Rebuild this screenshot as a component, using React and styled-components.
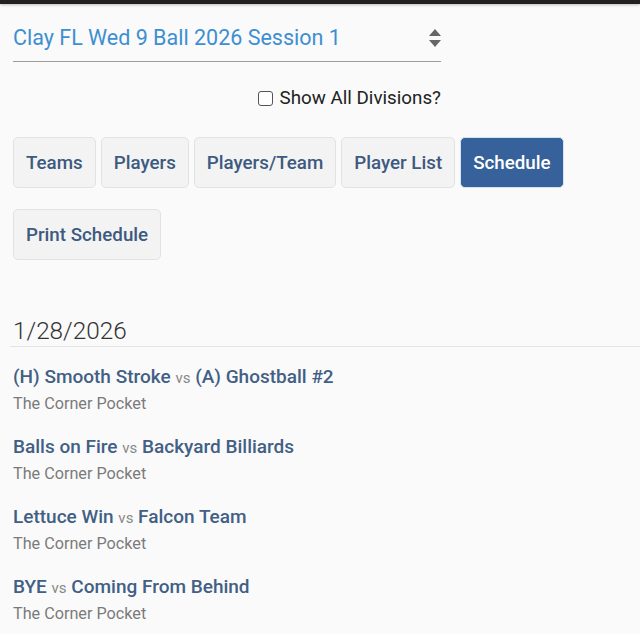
import React from 'react';
import styled, { createGlobalStyle } from 'styled-components';

const Global = createGlobalStyle`
  body {
    margin: 0;
    background: #fafafa;
    font-family: Roboto, "Liberation Sans", sans-serif;
  }
`;

const TopBar = styled.div`
  height: 4px;
  background: #231f20;
  box-shadow: 0 1px 3px rgba(0, 0, 0, 0.25);
`;

const Page = styled.div`
  padding: 0 0 0 13px;
`;

const Header = styled.div`
  width: 428px;
`;

const SelectBox = styled.div`
  margin-top: 18px;
  height: 40px;
  padding-bottom: 8px;
  box-sizing: border-box;
  display: flex;
  align-items: center;
  justify-content: space-between;
  border-bottom: 1px solid #9e9e9e;
  color: #3d8fd1;
  font-size: 21.5px;
`;

const Arrows = styled.svg`
  width: 12px;
  height: 18px;
`;

const CheckRow = styled.label`
  display: flex;
  justify-content: flex-end;
  align-items: center;
  gap: 7px;
  margin-top: 25px;
  font-size: 18.8px;
  color: #222;
`;

const Box = styled.span`
  width: 13px;
  height: 13px;
  border: 1px solid #555;
  border-radius: 3px;
  background: #fff;
`;

const Buttons = styled.div`
  display: flex;
  flex-wrap: wrap;
  gap: 21px 5px;
  margin-top: 28px;
`;

const Btn = styled.div`
  height: 49px;
  padding: 0 12px;
  display: flex;
  align-items: center;
  border-radius: 5px;
  font-size: 18.75px;
  font-weight: 500;
  border: 1px solid ${p => (p.active ? '#d6e2f0' : '#e2e2e2')};
  background: ${p => (p.active ? '#36619a' : '#f3f3f3')};
  color: ${p => (p.active ? '#fff' : '#3d5a80')};
`;

const DateHead = styled.div`
  margin: 56px 0 0 -3px;
  padding: 0 0 1px 3px;
  border-bottom: 1px solid #e4e4e4;
  font-size: 24.3px;
  font-weight: 300;
  color: #333;
`;

const Match = styled.div`
  margin-top: 18px;
  & + & {
    margin-top: 22px;
  }
`;

const Title = styled.div`
  font-size: 19px;
  font-weight: 500;
  color: #425f85;
`;

const Vs = styled.span`
  font-size: 15px;
  font-weight: 400;
  color: #888;
`;

const Venue = styled.div`
  margin-top: 6px;
  font-size: 16.2px;
  color: #7a7a7a;
`;

const matches = [
  ['(H) Smooth Stroke', '(A) Ghostball #2'],
  ['Balls on Fire', 'Backyard Billiards'],
  ['Lettuce Win', 'Falcon Team'],
  ['BYE', 'Coming From Behind'],
];

const tabs = ['Teams', 'Players', 'Players/Team', 'Player List', 'Schedule', 'Print Schedule'];

export default function App() {
  return (
    <>
      <Global />
      <TopBar />
      <Page>
        <Header>
          <SelectBox>
            <span>Clay FL Wed 9 Ball 2026 Session 1</span>
            <Arrows viewBox="0 0 12 18">
              <path d="M6 0 L12 7 H0 Z" fill="#666" />
              <path d="M0 11 H12 L6 18 Z" fill="#666" />
            </Arrows>
          </SelectBox>
          <CheckRow>
            <Box />
            <span>Show All Divisions?</span>
          </CheckRow>
        </Header>
        <Buttons>
          {tabs.map(t => (
            <Btn key={t} active={t === 'Schedule'}>{t}</Btn>
          ))}
        </Buttons>
        <DateHead>1/28/2026</DateHead>
        {matches.map(([h, a]) => (
          <Match key={h}>
            <Title>{h} <Vs>vs</Vs> {a}</Title>
            <Venue>The Corner Pocket</Venue>
          </Match>
        ))}
      </Page>
    </>
  );
}
